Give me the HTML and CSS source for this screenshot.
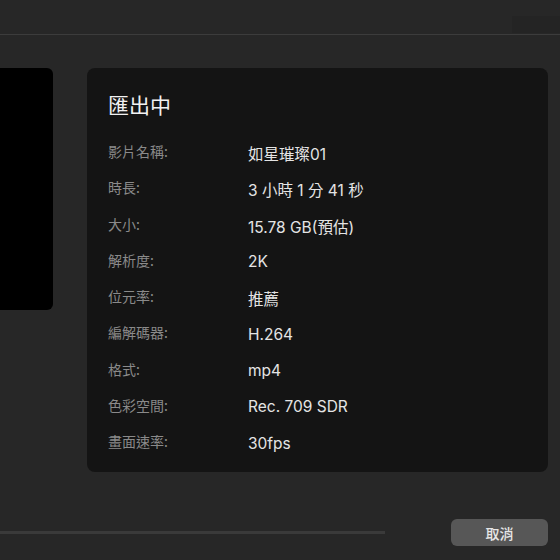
FILE: index.html
```html
<!DOCTYPE html>
<html lang="zh-Hant">
<head>
    <meta charset="UTF-8">
    <meta name="viewport" content="width=device-width, initial-scale=1.0">
    <title>匯出中</title>
    <link rel="stylesheet" href="styles.css">
</head>
<body>
    <div class="topbar">
        <div class="topbar-box"></div>
    </div>

    <div class="main">
        <!-- 預覽 -->
        <div class="preview"></div>

        <!-- 匯出資訊 -->
        <div class="card">
            <h2 class="card-title">匯出中</h2>
            <div class="info">
                <div class="label">影片名稱:</div><div class="value">如星璀璨01</div>
                <div class="label">時長:</div><div class="value">3 小時 1 分 41 秒</div>
                <div class="label">大小:</div><div class="value">15.78 GB(預估)</div>
                <div class="label">解析度:</div><div class="value">2K</div>
                <div class="label">位元率:</div><div class="value">推薦</div>
                <div class="label">編解碼器:</div><div class="value">H.264</div>
                <div class="label">格式:</div><div class="value">mp4</div>
                <div class="label">色彩空間:</div><div class="value">Rec. 709 SDR</div>
                <div class="label">畫面速率:</div><div class="value">30fps</div>
            </div>
        </div>
    </div>

    <div class="footer">
        <div class="progress"></div>
        <button class="btn-cancel">取消</button>
    </div>
</body>
</html>
```

FILE: styles.css
```css
body {
    margin: 0;
    height: 560px;
    overflow: hidden;
    background: #272727;
    font-family: "Inter", "Noto Sans CJK TC", sans-serif;
    color: #e2e2e2;
}

.topbar {
    height: 34px;
    border-bottom: 1px solid #3c3c3c;
    display: flex;
    justify-content: flex-end;
    align-items: flex-end;
}

.topbar-box {
    width: 48px;
    height: 17px;
    margin-bottom: 1px;
    background: #242424;
}

.main {
    display: flex;
    gap: 34px;
    padding-top: 33px;
}

.preview {
    width: 53px;
    height: 242px;
    background: #000;
    border-radius: 0 6px 6px 0;
}

.card {
    width: 461px;
    height: 404px;
    box-sizing: border-box;
    padding: 22px 21px;
    background: #141414;
    border-radius: 8px;
}

.card-title {
    margin: 0 0 17px;
    font-family: "Noto Sans CJK TC", sans-serif;
    font-size: 21px;
    line-height: 28px;
    font-weight: 400;
    color: #f2f2f2;
}

.info {
    display: grid;
    grid-template-columns: 140px 1fr;
    grid-auto-rows: 36.25px;
    align-items: center;
}

.label {
    font-family: "Noto Sans CJK TC", sans-serif;
    font-size: 14px;
    color: #8a8a8a;
    margin-top: -4px;
}

.value {
    font-size: 15.5px;
    color: #e4e4e4;
}

.footer {
    display: flex;
    align-items: center;
    margin-top: 47px;
    height: 27px;
}

.progress {
    width: 385px;
    height: 3px;
    background: #3a3a3a;
}

.btn-cancel {
    margin-left: auto;
    margin-right: 12px;
    width: 97px;
    height: 27px;
    border: none;
    border-radius: 6px;
    background: #575757;
    color: #e6e6e6;
    font-family: "Noto Sans CJK TC", sans-serif;
    font-size: 14px;
    font-weight: 500;
}
```
